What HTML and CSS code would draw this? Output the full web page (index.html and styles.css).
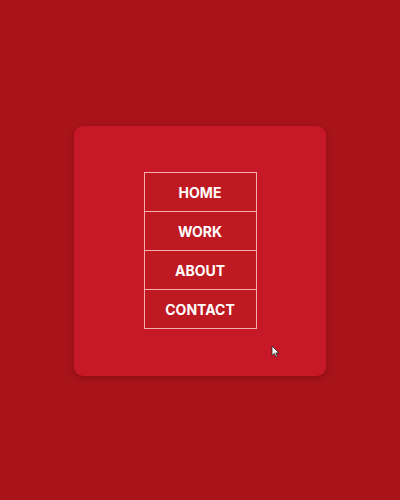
FILE: index.html
```html
<!DOCTYPE html>
<html>
<head>
<meta charset="utf-8">
<link rel="stylesheet" href="styles.css">
</head>
<body>
<div class="stage">
  <div class="card">
    <ul class="menu">
      <li class="item">HOME</li>
      <li class="item">WORK</li>
      <li class="item">ABOUT</li>
      <li class="item">CONTACT</li>
    </ul>
    <svg class="cursor" width="9" height="13" viewBox="0 0 9 13">
      <path d="M1 1 L1 10.5 L3.3 8.4 L5 12 L6.4 11.4 L4.8 7.9 L7.9 7.9 Z" fill="#fff" stroke="#222" stroke-width="0.8" stroke-linejoin="round"/>
    </svg>
  </div>
</div>
</body>
</html>
```

FILE: styles.css
```css
html, body {
  margin: 0;
  padding: 0;
}
body {
  background: #a8141a;
  font-family: Inter, "Liberation Sans", sans-serif;
}
.stage {
  width: 400px;
  height: 500px;
  display: flex;
  align-items: center;
  justify-content: center;
}
.card {
  position: relative;
  width: 252px;
  height: 250px;
  margin-top: 2px;
  box-sizing: border-box;
  background: #c61826;
  border-radius: 9px;
  box-shadow: 0 2px 6px rgba(80, 0, 0, 0.35);
  display: flex;
  align-items: center;
  justify-content: center;
}
.menu {
  list-style: none;
  margin: 0 0 1px 0;
  padding: 0;
  width: 113px;
  border: 1px solid rgba(255, 200, 200, 0.85);
  box-sizing: border-box;
}
.item {
  height: 38px;
  display: flex;
  align-items: center;
  justify-content: center;
  background: #bf1a21;
  color: #fff;
  font-family: Inter, sans-serif;
  font-weight: 700;
  font-size: 14px;
}
.item + .item {
  border-top: 1px solid rgba(255, 200, 200, 0.85);
}
.cursor {
  position: absolute;
  left: 197px;
  top: 219px;
}
```
